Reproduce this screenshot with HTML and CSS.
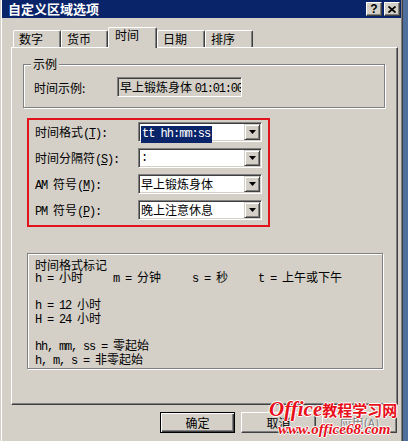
FILE: index.html
```html
<!DOCTYPE html>
<html lang="zh-CN">
<head>
    <meta charset="UTF-8">
    <title>自定义区域选项</title>
    <link rel="stylesheet" href="styles.css">
</head>
<body>
    <div class="dialog">
        <div class="titlebar">
            <span class="title">自定义区域选项</span>
            <div class="caption-btns">
                <span class="cap-btn help">?</span>
                <span class="cap-btn">
                    <svg width="8" height="7" viewBox="0 0 8 7"><path d="M0.5 0.5L7.5 6.5M7.5 0.5L0.5 6.5" stroke="#000" stroke-width="1.7"/></svg>
                </span>
            </div>
        </div>

        <div class="tabs">
            <div class="tab">数字</div>
            <div class="tab">货币</div>
            <div class="tab active">时间</div>
            <div class="tab">日期</div>
            <div class="tab">排序</div>
        </div>

        <div class="panel">
            <div class="group sample">
                <div class="legend">示例</div>
                <div class="row">
                    <span class="sample-label">时间示例:</span>
                    <div class="textbox">早上锻炼身体 <span class="m">01:01:00</span></div>
                </div>
            </div>

            <div class="highlight">
                <div class="field">
                    <span class="field-label">时间格式<span class="m">(<u>T</u>):</span></span>
                    <div class="combo">
                        <div class="value"><span class="sel m">tt hh:mm:ss</span></div>
                        <div class="arrow"><svg width="7" height="4" viewBox="0 0 7 4"><path d="M0 0h7L3.5 4z" fill="#000"/></svg></div>
                    </div>
                </div>
                <div class="field">
                    <span class="field-label">时间分隔符<span class="m">(<u>S</u>):</span></span>
                    <div class="combo">
                        <div class="value m">:</div>
                        <div class="arrow"><svg width="7" height="4" viewBox="0 0 7 4"><path d="M0 0h7L3.5 4z" fill="#000"/></svg></div>
                    </div>
                </div>
                <div class="field">
                    <span class="field-label"><span class="m">AM </span>符号<span class="m">(<u>M</u>):</span></span>
                    <div class="combo">
                        <div class="value">早上锻炼身体</div>
                        <div class="arrow"><svg width="7" height="4" viewBox="0 0 7 4"><path d="M0 0h7L3.5 4z" fill="#000"/></svg></div>
                    </div>
                </div>
                <div class="field">
                    <span class="field-label"><span class="m">PM </span>符号<span class="m">(<u>P</u>):</span></span>
                    <div class="combo">
                        <div class="value">晚上注意休息</div>
                        <div class="arrow"><svg width="7" height="4" viewBox="0 0 7 4"><path d="M0 0h7L3.5 4z" fill="#000"/></svg></div>
                    </div>
                </div>
            </div>

            <div class="group notes">
                <div>时间格式标记</div>
                <div class="cols">
                    <span class="col-h"><span class="m">h = </span>小时</span>
                    <span class="col-m"><span class="m">m = </span>分钟</span>
                    <span class="col-s"><span class="m">s = </span>秒</span>
                    <span><span class="m">t = </span>上午或下午</span>
                </div>
                <div class="blank"></div>
                <div><span class="m">h = 12 </span>小时</div>
                <div><span class="m">H = 24 </span>小时</div>
                <div class="blank"></div>
                <div><span class="m">hh, mm, ss = </span>零起始</div>
                <div><span class="m">h, m, s = </span>非零起始</div>
            </div>
        </div>

        <div class="buttons">
            <div class="btn default">确定</div>
            <div class="btn">取消</div>
            <div class="btn disabled">应用(A)</div>
        </div>

        <div class="watermark">
            <div class="wm-top"><span class="wm-office">Office</span>教程学习网</div>
            <div class="wm-url">www.office68.com</div>
        </div>
    </div>
</body>
</html>
```

FILE: styles.css
```css
body {
    margin: 0;
    background-color: #4f6f9f;
    font-family: "Noto Sans CJK SC", sans-serif;
    font-size: 12px;
    color: #000;
    overflow: hidden;
}
.m {
    font-family: "Liberation Mono", monospace;
    font-size: 12px;
    letter-spacing: -1.2px;
}
.dialog {
    position: relative;
    width: 403px;
    height: 441px;
    box-sizing: border-box;
    padding: 0 1px;
    background-color: #d4d0c8;
    border-left: 1px solid #d4d0c8;
    border-right: 1px solid #404040;
    box-shadow: inset 1px 0 #fff, inset -1px 0 #808080;
}

/* title bar */
.titlebar {
    height: 18px;
    background-color: #0a246a;
    display: flex;
    align-items: center;
    padding: 0 1px 0 6px;
}
.title {
    color: #fff;
    font-weight: bold;
    font-size: 13px;
    line-height: 14px;
}
.caption-btns {
    margin-left: auto;
    display: flex;
    gap: 2px;
}
.cap-btn {
    width: 16px;
    height: 14px;
    box-sizing: border-box;
    background-color: #d4d0c8;
    border: 1px solid;
    border-color: #fff #404040 #404040 #fff;
    box-shadow: inset -1px -1px #808080;
    display: flex;
    align-items: center;
    justify-content: center;
}
.help {
    font: bold 12px "Liberation Sans", sans-serif;
    line-height: 12px;
}

/* tabs */
.tabs {
    display: flex;
    align-items: flex-end;
    height: 20px;
    margin-top: 9px;
    padding-left: 11px;
}
.tab {
    width: 48px;
    height: 17px;
    box-sizing: border-box;
    padding: 1px 0 0 5px;
    line-height: 14px;
    background-color: #d4d0c8;
    border-top: 1px solid #fff;
    border-left: 1px solid #fff;
    border-right: 1px solid #404040;
    box-shadow: inset -1px 0 #808080;
    border-radius: 2px 2px 0 0;
}
.tab:nth-child(2) {
    width: 47px;
}
.tab.active {
    width: 49px;
    height: 21px;
    margin-bottom: -1px;
    padding: 0 0 0 6px;
    position: relative;
    z-index: 1;
}

/* tab page */
.panel {
    margin-left: 9px;
    width: 387px;
    height: 358px;
    box-sizing: border-box;
    border: 1px solid;
    border-color: #fff #404040 #404040 #fff;
    box-shadow: inset -1px -1px #808080;
    padding: 16px 0 0 11px;
}
.group {
    box-sizing: border-box;
    border: 1px solid #808080;
    box-shadow: inset 1px 1px #fff, 1px 1px #fff;
}
.sample {
    width: 362px;
    height: 44px;
}
.legend {
    width: fit-content;
    margin: -8px 0 0 7px;
    padding: 0 2px;
    line-height: 14px;
    background-color: #d4d0c8;
}
.row {
    display: flex;
    align-items: center;
    margin-top: 6px;
    padding-left: 10px;
}
.sample-label {
    width: 83px;
}
.textbox {
    width: 125px;
    height: 20px;
    box-sizing: border-box;
    padding: 1px 0 1px 2px;
    border: 1px solid;
    border-color: #808080 #fff #fff #808080;
    box-shadow: inset 1px 1px #404040, inset -1px -1px #d4d0c8;
    line-height: 16px;
    white-space: nowrap;
    overflow: hidden;
}

/* red marked area */
.highlight {
    margin: 10px 0 0 4px;
    width: 243px;
    height: 109px;
    box-sizing: border-box;
    border: 2px solid #e3131b;
    padding: 2px 0 0 6px;
    display: flex;
    flex-direction: column;
    gap: 6px;
}
.field {
    display: flex;
    align-items: center;
    height: 20px;
}
.field-label {
    width: 103px;
}
.combo {
    width: 124px;
    height: 20px;
    box-sizing: border-box;
    padding: 1px;
    border: 1px solid;
    border-color: #808080 #fff #fff #808080;
    box-shadow: inset 1px 1px #404040, inset -1px -1px #d4d0c8;
    background-color: #fff;
    display: flex;
}
.value {
    flex: 1;
    padding-left: 1px;
    line-height: 16px;
    white-space: nowrap;
}
.sel {
    letter-spacing: -1px;
    background-color: #0a246a;
    color: #fff;
    padding: 1px 2px 2px 1px;
}
.arrow {
    width: 16px;
    height: 16px;
    box-sizing: border-box;
    background-color: #d4d0c8;
    border: 1px solid;
    border-color: #d4d0c8 #404040 #404040 #d4d0c8;
    box-shadow: inset 1px 1px #fff, inset -1px -1px #808080;
    display: flex;
    align-items: center;
    justify-content: center;
}

/* format notes */
.notes {
    margin: 26px 0 0 4px;
    width: 356px;
    height: 116px;
    padding: 5px 0 0 7px;
    line-height: 12.33px;
}
.cols {
    display: flex;
}
.col-h {
    width: 78px;
}
.col-m {
    width: 79px;
}
.col-s {
    width: 66px;
}
.blank {
    height: 12.33px;
}

/* buttons */
.buttons {
    display: flex;
    justify-content: flex-end;
    gap: 6px;
    margin-top: 7px;
    padding-right: 4px;
}
.btn {
    width: 75px;
    height: 21px;
    box-sizing: border-box;
    border: 1px solid;
    border-color: #fff #404040 #404040 #fff;
    box-shadow: inset -1px -1px #808080;
    display: flex;
    align-items: center;
    justify-content: center;
}
.btn.default {
    border-color: #000;
    box-shadow: inset 1px 1px #fff, inset -1px -1px #404040, inset -2px -2px #808080;
}
.btn.disabled {
    color: #808080;
    text-shadow: 1px 1px #fff;
}

/* watermark over the buttons */
.watermark {
    position: absolute;
    left: 268px;
    top: 397px;
    color: #e8101a;
    text-shadow: 1px 0 #fff, -1px 0 #fff, 0 1px #fff, 0 -1px #fff;
    white-space: nowrap;
}
.wm-top {
    font-weight: bold;
    font-size: 15px;
    line-height: 21px;
}
.wm-office {
    font: italic bold 21px "Liberation Serif", serif;
}
.wm-url {
    margin: -1px 0 0 9px;
    font: italic bold 15px "Liberation Serif", serif;
    line-height: 16px;
}
```
